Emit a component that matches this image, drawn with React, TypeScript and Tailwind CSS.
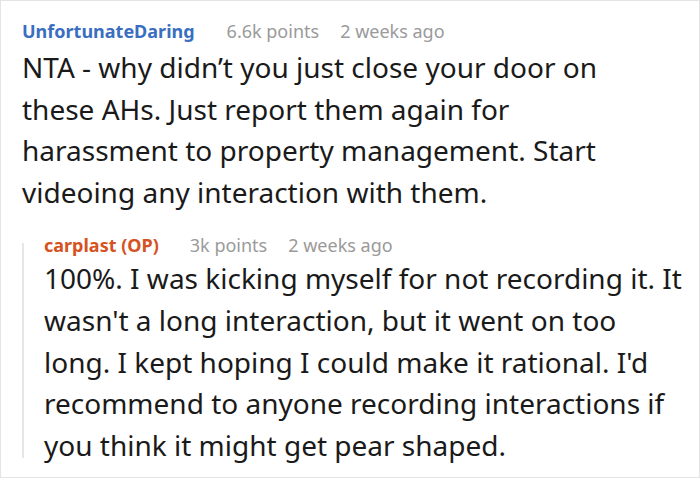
export default function App() {
  return (
    <div
      className="w-[700px] h-[478px] border border-[#e4e4e4] bg-white pl-[21px] pr-[10px] pt-[18px] text-[#1a1a1a] overflow-hidden"
      style={{ fontFamily: '"Noto Sans", "Open Sans", sans-serif' }}
    >
      <div className="flex items-baseline text-[18px] leading-[24px]">
        <span className="font-bold text-[#3a6ec0] mr-[32px]">UnfortunateDaring</span>
        <span className="text-[#9a9a9a] mr-[21px]">6.6k points</span>
        <span className="text-[#9a9a9a]">2 weeks ago</span>
      </div>
      <p className="mt-[4px] pr-[22px] text-[28px] leading-[41.6px]">
        NTA - why didn’t you just close your door on these AHs. Just report them again for harassment to property management. Start videoing any interaction with them.
      </p>
      <div className="mt-[20px] flex">
        <div className="w-[2px] bg-[#e6e6e6] mt-[10px] mb-[8px] shrink-0" />
        <div className="pl-[20px] min-w-0">
          <div className="flex items-baseline text-[18px] leading-[24px]">
            <span className="font-bold text-[#d6521f] mr-[31px]">carplast (OP)</span>
            <span className="text-[#9a9a9a] mr-[21px]">3k points</span>
            <span className="text-[#9a9a9a]">2 weeks ago</span>
          </div>
          <p className="mt-[1px] text-[28px] leading-[41.6px]">
            100%. I was kicking myself for not recording it. It wasn't a long interaction, but it went on too long. I kept hoping I could make it rational. I'd recommend to anyone recording interactions if you think it might get pear shaped.
          </p>
        </div>
      </div>
    </div>
  );
}
